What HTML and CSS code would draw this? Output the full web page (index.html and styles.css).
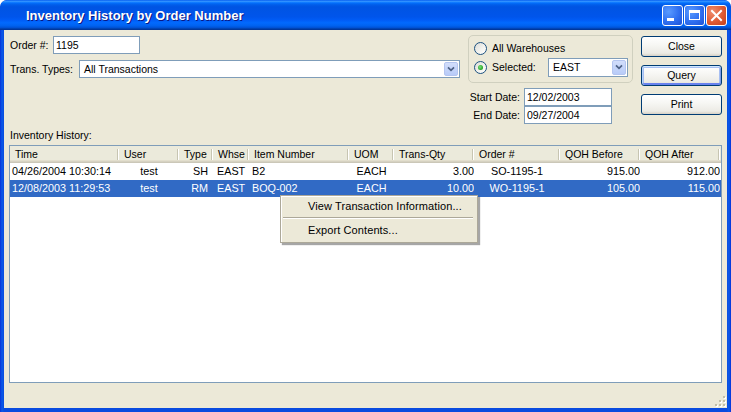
FILE: index.html
```html
<!DOCTYPE html>
<html>
<head>
<meta charset="utf-8">
<link rel="stylesheet" href="styles.css">
</head>
<body>
<div class="window">
  <div class="titlebar">
    <span class="title">Inventory History by Order Number</span>
    <div class="caption-btns">
      <span class="cbtn blue"><svg width="21" height="21" viewBox="0 0 21 21"><rect x="5" y="13" width="7" height="3" fill="#fff"/></svg></span>
      <span class="cbtn blue"><svg width="21" height="21" viewBox="0 0 21 21"><rect x="5" y="5" width="11" height="3" fill="#fff"/><rect x="5.5" y="5.5" width="10" height="9" fill="none" stroke="#fff" stroke-width="1"/></svg></span>
      <span class="cbtn red"><svg width="21" height="21" viewBox="0 0 21 21"><path d="M6 6 L15 15 M15 6 L6 15" stroke="#fff" stroke-width="2" stroke-linecap="square"/></svg></span>
    </div>
  </div>
  <div class="frame">
    <div class="client">
      <div class="top">
        <div class="left-col">
          <div class="frow">
            <span class="lbl order-lbl">Order #:</span>
            <div class="input order-in">1195</div>
          </div>
          <div class="frow r2">
            <span class="lbl types-lbl">Trans. Types:</span>
            <div class="combo types">
              <span class="combo-text">All Transactions</span>
              <span class="drop"><svg width="14" height="14" viewBox="0 0 14 14"><polyline points="3.5,5 7,8.5 10.5,5" fill="none" stroke="#4D6185" stroke-width="2"/></svg></span>
            </div>
          </div>
        </div>
        <div class="mid-col">
          <div class="groupbox">
            <div class="radio-row first">
              <span class="radio"></span>
              <span class="radio-text">All Warehouses</span>
            </div>
            <div class="radio-row second">
              <span class="radio checked"><span class="dot"></span></span>
              <span class="radio-text sel-label">Selected:</span>
              <div class="combo whs">
                <span class="combo-text">EAST</span>
                <span class="drop"><svg width="14" height="14" viewBox="0 0 14 14"><polyline points="3.5,5 7,8.5 10.5,5" fill="none" stroke="#4D6185" stroke-width="2"/></svg></span>
              </div>
            </div>
          </div>
          <div class="dates">
            <div class="drow"><span class="dlbl">Start Date:</span><div class="input date">12/02/2003</div></div>
            <div class="drow second"><span class="dlbl">End Date:</span><div class="input date">09/27/2004</div></div>
          </div>
        </div>
        <div class="btn-col">
          <div class="btn">Close</div>
          <div class="btn default">Query</div>
          <div class="btn">Print</div>
        </div>
      </div>
      <div class="list-label">Inventory History:</div>
      <div class="list">
        <div class="grid hdr">
          <div class="h">Time</div>
          <div class="h">User</div>
          <div class="h">Type</div>
          <div class="h">Whse</div>
          <div class="h">Item Number</div>
          <div class="h">UOM</div>
          <div class="h">Trans-Qty</div>
          <div class="h">Order #</div>
          <div class="h">QOH Before</div>
          <div class="h">QOH After</div>
        </div>
        <div class="grid item">
          <div class="c time">04/26/2004 10:30:14</div>
          <div class="c ctr">test</div>
          <div class="c type">SH</div>
          <div class="c whse">EAST</div>
          <div class="c itemno">B2</div>
          <div class="c ctr">EACH</div>
          <div class="c num">3.00</div>
          <div class="c ctr">SO-1195-1</div>
          <div class="c num">915.00</div>
          <div class="c num">912.00</div>
        </div>
        <div class="grid item selected">
          <div class="c time">12/08/2003 11:29:53</div>
          <div class="c ctr">test</div>
          <div class="c type">RM</div>
          <div class="c whse">EAST</div>
          <div class="c itemno">BOQ-002</div>
          <div class="c ctr">EACH</div>
          <div class="c num">10.00</div>
          <div class="c ctr">WO-1195-1</div>
          <div class="c num">105.00</div>
          <div class="c num">115.00</div>
        </div>
      </div>
      <div class="bottom">
        <svg class="grip" width="11" height="11" viewBox="0 0 11 11">
          <g fill="#fff">
            <rect x="9" y="1" width="2" height="2"/>
            <rect x="5" y="5" width="2" height="2"/><rect x="9" y="5" width="2" height="2"/>
            <rect x="1" y="9" width="2" height="2"/><rect x="5" y="9" width="2" height="2"/><rect x="9" y="9" width="2" height="2"/>
          </g>
          <g fill="#C1BEA8">
            <rect x="8" y="0" width="2" height="2"/>
            <rect x="4" y="4" width="2" height="2"/><rect x="8" y="4" width="2" height="2"/>
            <rect x="0" y="8" width="2" height="2"/><rect x="4" y="8" width="2" height="2"/><rect x="8" y="8" width="2" height="2"/>
          </g>
        </svg>
      </div>
    </div>
  </div>
  <div class="menu">
    <div class="mi">View Transaction Information...</div>
    <div class="msep"></div>
    <div class="mi">Export Contents...</div>
  </div>
</div>
</body>
</html>
```
FILE: styles.css
```css
* { box-sizing: border-box; }
html, body { margin: 0; padding: 0; }
body {
  width: 731px;
  height: 412px;
  overflow: hidden;
  background: #ffffff;
  font-family: "Liberation Sans", Arial, sans-serif;
  font-size: 10.5px;
  color: #000;
}
.window {
  position: relative;
  width: 731px;
  height: 412px;
  display: flex;
  flex-direction: column;
  background: #0A4BDF;
  border-radius: 7px 7px 0 0;
  overflow: hidden;
}
.titlebar {
  height: 30px;
  flex: none;
  display: flex;
  align-items: center;
  padding: 0 4px 0 26px;
  border-radius: 7px 7px 0 0;
  background: linear-gradient(#0058EE 0%, #3593FF 4%, #288EFF 6%, #127DFF 8%, #036FFC 10%, #0262EE 14%, #0057E5 20%, #0054E3 24%, #0055EB 56%, #005BF5 66%, #026AFE 76%, #0062EF 86%, #0052D6 92%, #0040AB 96%, #003092 100%);
}
.title {
  color: #fff;
  font-weight: bold;
  font-size: 13px;
  text-shadow: 1px 1px 0 #0A1883;
  padding-top: 1px;
}
.caption-btns {
  margin-left: auto;
  display: flex;
  gap: 1px;
}
.cbtn {
  width: 21px;
  height: 21px;
  border: 1px solid #fff;
  border-radius: 3px;
  display: block;
  overflow: hidden;
}
.cbtn svg { display: block; margin: -1px; }
.cbtn.blue {
  background: radial-gradient(circle at 30% 30%, #5A9BFF 0%, #2F6FF0 55%, #1D52D6 100%);
}
.cbtn.red {
  background: radial-gradient(circle at 30% 30%, #F08E6E 0%, #DE5A33 55%, #C2401C 100%);
}
.frame {
  flex: 1;
  display: flex;
  padding: 0 4px 4px 4px;
  background: linear-gradient(to right, #0831D9 0, #0A5AE8 2px, #0A4BDF 4px, #0A4BDF 727px, #0A5AE8 729px, #0831D9 731px);
}
.client {
  flex: 1;
  display: flex;
  flex-direction: column;
  background: #ECE9D8;
}
.top {
  height: 98px;
  flex: none;
  display: flex;
  gap: 8px;
  padding: 0 5px 0 6px;
}
.left-col {
  width: 450px;
  padding-top: 6px;
}
.frow {
  height: 18px;
  display: flex;
  align-items: center;
}
.frow.r2 { margin-top: 6px; }
.order-lbl { width: 43px; }
.types-lbl { width: 69px; }
.input {
  height: 18px;
  border: 1px solid #7F9DB9;
  background: #fff;
  padding-left: 2px;
  line-height: 16px;
}
.order-in { width: 87px; }
.combo {
  height: 18px;
  border: 1px solid #7F9DB9;
  background: #fff;
  display: flex;
  align-items: stretch;
  padding: 1px;
}
.combo-text {
  flex: 1;
  padding-left: 3px;
  line-height: 14px;
}
.combo.types { width: 381px; }
.drop {
  width: 14px;
  border: 1px solid #B4C5F0;
  border-radius: 2px;
  background: linear-gradient(#D2DEFB, #B8CBF8);
  display: flex;
  align-items: center;
  justify-content: center;
}
.drop svg { display: block; }
.mid-col {
  width: 165px;
  padding-top: 5px;
}
.groupbox {
  height: 48px;
  border: 1px solid #D0D0BF;
  border-radius: 5px;
  padding: 0 4px 0 5px;
}
.radio-row {
  display: flex;
  align-items: center;
}
.radio-row.first { margin-top: 5px; height: 14px; }
.radio-row.second { margin-top: 2px; height: 20px; }
.radio {
  width: 13px;
  height: 13px;
  border: 1px solid #1C5180;
  border-radius: 50%;
  background: linear-gradient(135deg, #DCDCD7 0%, #F4F4F0 60%, #FFFFFF 100%);
  display: flex;
  align-items: center;
  justify-content: center;
  flex: none;
}
.dot {
  width: 5px;
  height: 5px;
  border-radius: 50%;
  background: radial-gradient(circle at 40% 40%, #7DE07D 0%, #22A422 70%, #1A8A1A 100%);
}
.radio-text { margin-left: 5px; }
.sel-label { width: 56px; margin-left: 5px; flex: none; }
.combo.whs { width: 80px; height: 19px; }
.combo.whs .combo-text { line-height: 15px; }
.dates { margin-top: 5px; }
.drow {
  display: flex;
  align-items: center;
  height: 18px;
}
.drow.second { margin-top: 0; }
.dlbl {
  width: 52px;
  text-align: right;
  margin-right: 4px;
}
.input.date { width: 88px; }
.btn-col {
  width: 81px;
  padding-top: 6px;
  display: flex;
  flex-direction: column;
  gap: 8px;
}
.btn {
  height: 21px;
  border: 1px solid #003C74;
  border-radius: 3px;
  background: linear-gradient(#FFFFFF 0%, #F7F7F4 40%, #ECEBE5 85%, #D6D0C5 100%);
  text-align: center;
  line-height: 19px;
}
.btn.default {
  box-shadow: inset 0 1px 0 #CEE7FF, inset 1px 0 0 #B8D3FA, inset -1px 0 0 #7B9AE8, inset 0 -2px 0 #6982EE, inset 0 0 0 2px #A7BFF2;
}
.list-label {
  height: 17px;
  flex: none;
  padding-left: 6px;
  line-height: 14px;
}
.list {
  height: 238px;
  flex: none;
  margin: 0 5px;
  border: 1px solid #7F9DB9;
  background: #fff;
}
.grid {
  display: grid;
  grid-template-columns: 109px 60px 34px 36px 100px 45px 80px 86px 80px 80px;
  height: 17px;
}
.hdr {
  background: #EBEADB;
  box-shadow: inset 0 -1px 0 #CBC7B8, inset 0 -2px 0 #D6D2C2, inset 0 -3px 0 #E2DECD;
}
.h {
  padding-left: 5px;
  line-height: 16px;
  white-space: nowrap;
  background:
    linear-gradient(#C7C5B2, #C7C5B2) no-repeat right 1px top 3px / 1px 11px,
    linear-gradient(#FFFFFF, #FFFFFF) no-repeat right 0 top 3px / 1px 11px;
}
.item .c {
  line-height: 17px;
  white-space: nowrap;
  overflow: hidden;
  font-size: 10.8px;
}
.item.selected {
  background: #316AC5;
  color: #fff;
}
.c.time { padding-left: 2px; }
.c.ctr { text-align: center; }
.c.type { text-align: right; padding-right: 5px; }
.c.whse { padding-left: 4px; }
.c.itemno { padding-left: 3px; }
.c.num { text-align: right; padding-right: 0; }
.bottom {
  flex: 1;
  display: flex;
  justify-content: flex-end;
  align-items: flex-end;
  padding: 0 1px 1px 0;
}
.grip { display: block; }
.menu {
  position: absolute;
  left: 280px;
  top: 195px;
  width: 198px;
  height: 48px;
  background: #ECE9D8;
  border: 1px solid #ACA899;
  box-shadow: inset 1px 1px 0 #fff, 2px 2px 1px rgba(0, 0, 0, 0.35);
  padding: 2px 2px 3px 1px;
  font-size: 11px;
}
.mi {
  height: 17px;
  line-height: 17px;
  padding-left: 26px;
  letter-spacing: 0.1px;
}
.msep {
  height: 7px;
  margin: 0 2px 0 1px;
  background: linear-gradient(#ACA899, #ACA899) no-repeat left 0 top 2px / 100% 1px,
              linear-gradient(#FFFFFF, #FFFFFF) no-repeat left 0 top 3px / 100% 1px;
}
```
